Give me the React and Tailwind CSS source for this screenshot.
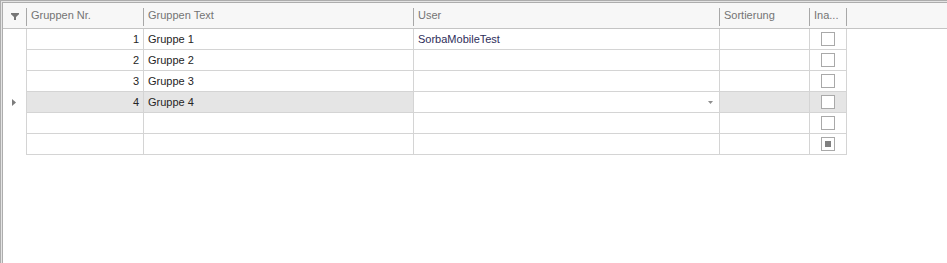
import React from 'react';

const cols = [
  { key: 'nr', header: 'Gruppen Nr.', w: 'w-[117px]', align: 'right' },
  { key: 'text', header: 'Gruppen Text', w: 'w-[270px]' },
  { key: 'user', header: 'User', w: 'w-[306px]' },
  { key: 'sort', header: 'Sortierung', w: 'w-[90px]' },
  { key: 'ina', header: 'Ina...', w: 'w-[37px]', check: true },
];

const rows = [
  { nr: '1', text: 'Gruppe 1', user: 'SorbaMobileTest' },
  { nr: '2', text: 'Gruppe 2' },
  { nr: '3', text: 'Gruppe 3' },
  { nr: '4', text: 'Gruppe 4', focused: true },
  {},
  { newRow: true },
];

function FilterIcon() {
  return (
    <svg width="8" height="7" viewBox="0 0 8 7" className="block">
      <path d="M0 0h8v1.2L5 4v3H3V4L0 1.2z" fill="#767676" />
    </svg>
  );
}

function CheckBox({ indeterminate }) {
  return (
    <div className="w-[14px] h-[14px] border border-[#a9a9a9] bg-white flex items-center justify-center">
      {indeterminate && <div className="w-[6px] h-[6px] bg-[#808080]" />}
    </div>
  );
}

function HeaderCell({ col }) {
  return (
    <div className={`${col.w} flex shrink-0`}>
      <div className="flex-1 pl-[4px] flex items-center text-[#747474] overflow-hidden whitespace-nowrap">{col.header}</div>
      <div className="w-px bg-[#a8a8a8] mt-[5px] mb-[2px]" />
    </div>
  );
}

function DataCell({ col, row }) {
  const editor = row.focused && col.key === 'user';
  const bg = row.focused && !editor ? 'bg-[#e5e5e5]' : 'bg-white';
  if (col.check) {
    return (
      <div className={`${col.w} ${bg} shrink-0 border-r border-b border-[#d4d4d4] flex items-center justify-center`}>
        <CheckBox indeterminate={row.newRow} />
      </div>
    );
  }
  return (
    <div
      className={`${col.w} ${bg} shrink-0 border-r border-b border-[#d4d4d4] flex items-center px-[4px] whitespace-nowrap overflow-hidden ${col.align === 'right' ? 'justify-end' : ''} ${col.key === 'user' ? 'text-[#2e2e5a]' : 'text-[#252525]'}`}
    >
      {editor ? (
        <div className="flex-1 flex justify-end pr-[2px]">
          <svg width="5" height="3" viewBox="0 0 5 3" className="block">
            <path d="M0 0h5L2.5 3z" fill="#8e8e8e" />
          </svg>
        </div>
      ) : (
        row[col.key]
      )}
    </div>
  );
}

export default function App() {
  return (
    <div
      className="w-[947px] h-[263px] border-l border-t border-[#adadad] bg-[#e4e4e4] pl-px pt-px overflow-hidden text-[11px] leading-none"
      style={{ fontFamily: '"Liberation Sans", Arial, sans-serif' }}
    >
      <div className="h-full border-l border-t border-[#adadad] bg-white">
        {/* header */}
        <div className="h-[26px] flex bg-[#f7f7f7] border-b border-[#c4c4c4]">
          <div className="w-[24px] flex shrink-0">
            <div className="flex-1 flex items-center justify-center pl-px pt-px">
              <FilterIcon />
            </div>
            <div className="w-px bg-[#a8a8a8] mt-[5px] mb-[2px]" />
          </div>
          {cols.map(c => <HeaderCell key={c.key} col={c} />)}
        </div>

        {/* rows */}
        {rows.map((row, i) => (
          <div key={i} className="h-[21px] flex">
            <div className="w-[24px] shrink-0 border-r border-[#d4d4d4] flex items-center justify-center">
              {row.focused && (
                <svg width="4" height="7" viewBox="0 0 4 7" className="block ml-[-1px]">
                  <path d="M0 0l4 3.5L0 7z" fill="#7c7c7c" />
                </svg>
              )}
            </div>
            {cols.map(c => <DataCell key={c.key} col={c} row={row} />)}
          </div>
        ))}
      </div>
    </div>
  );
}
